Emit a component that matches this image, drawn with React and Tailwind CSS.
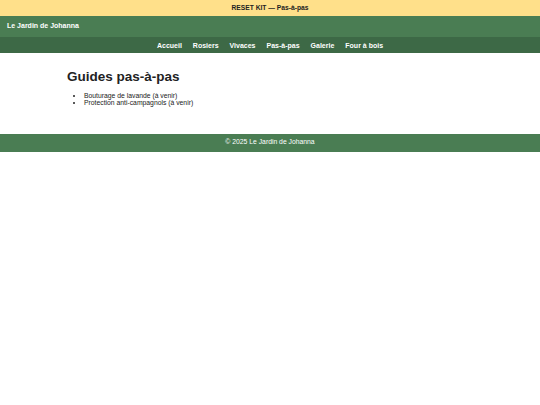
export default function App() {
  const links = ["Accueil", "Rosiers", "Vivaces", "Pas-à-pas", "Galerie", "Four à bois"];
  return (
    <div className="min-h-[405px] bg-white font-['Liberation_Sans',Arial,sans-serif]">
      <div className="h-[16px] bg-[#ffe08a] flex items-center justify-center text-[6.7px] font-bold text-[#222]">
        RESET KIT — Pas-à-pas
      </div>
      <header className="h-[21px] bg-[#4a7d53] flex items-center px-[7px] text-[7px] font-bold text-white">
        Le Jardin de Johanna
      </header>
      <nav className="h-[16px] bg-[#3d6946] flex items-center justify-center gap-[11px] text-[7px] font-bold text-white">
        {links.map((l) => (
          <a key={l} className="leading-none">{l}</a>
        ))}
      </nav>
      <main className="max-w-[406px] mx-auto pt-[16px] pb-[27px]">
        <h1 className="text-[13.5px] leading-[16px] font-bold text-[#222]">Guides pas-à-pas</h1>
        <ul className="mt-[6.5px] pl-[17px] list-disc text-[6.8px] leading-[7.5px] text-[#222]">
          <li>Bouturage de lavande (à venir)</li>
          <li>Protection anti-campagnols (à venir)</li>
        </ul>
      </main>
      <footer className="h-[18px] bg-[#4a7d53] flex items-center justify-center text-[6.8px] text-white">
        © 2025 Le Jardin de Johanna
      </footer>
    </div>
  );
}
